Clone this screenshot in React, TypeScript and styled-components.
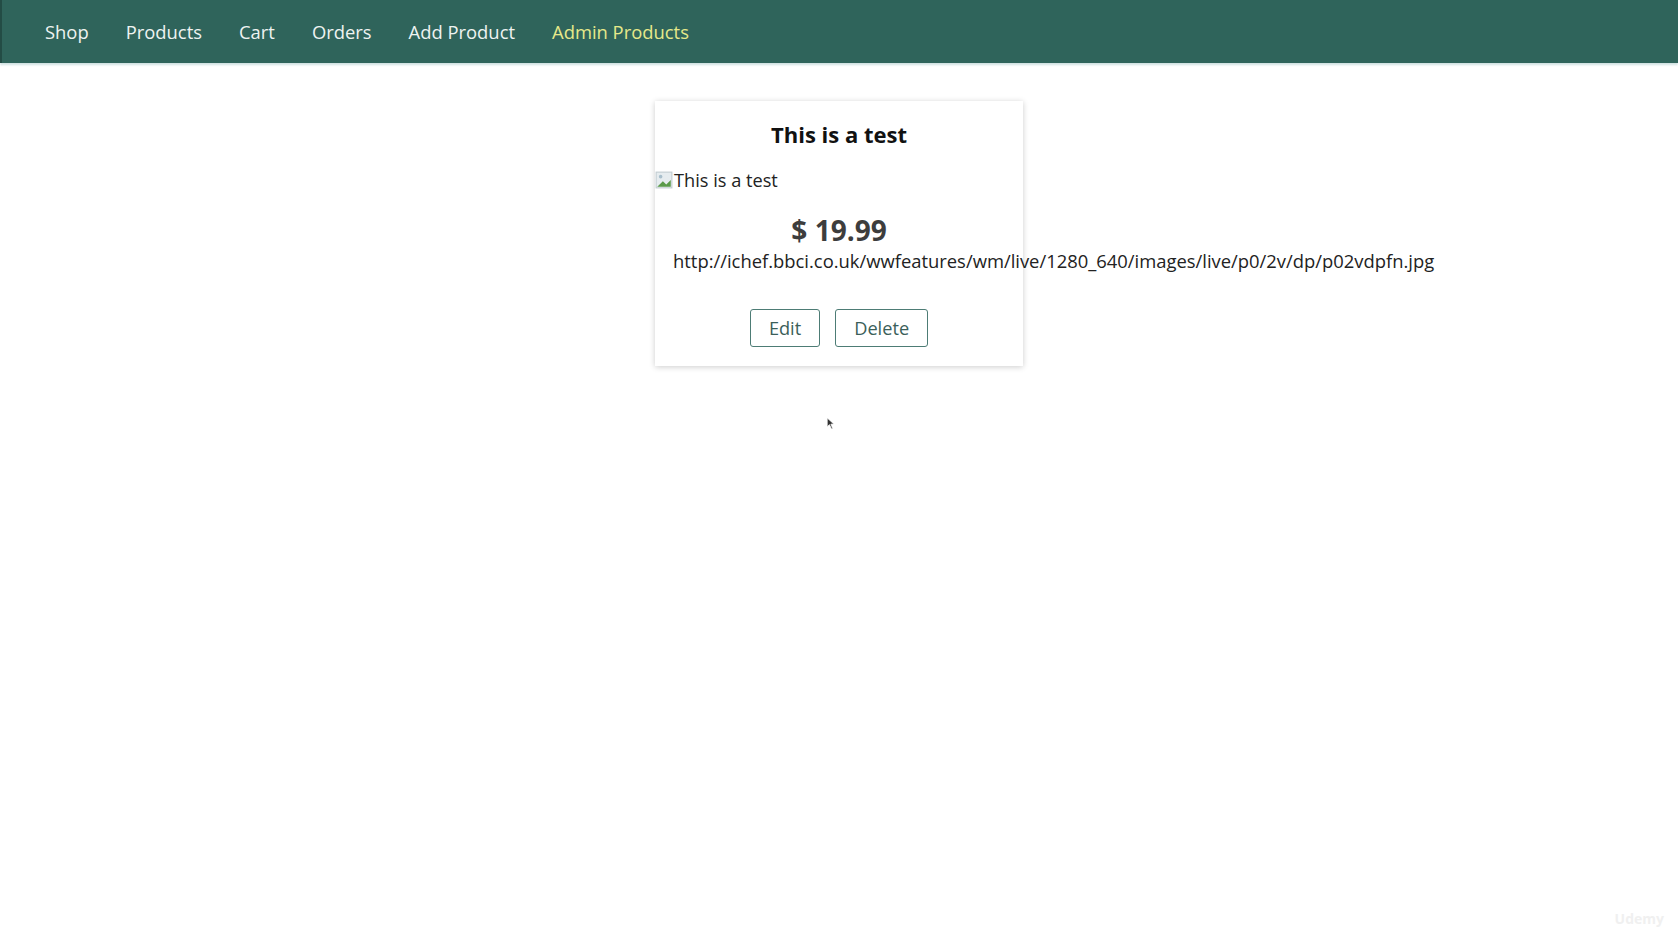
import * as React from 'react';
import styled, { createGlobalStyle } from 'styled-components';

const GlobalStyle = createGlobalStyle`
  * {
    box-sizing: border-box;
  }
  html, body {
    margin: 0;
    padding: 0;
    background: #ffffff;
    font-family: 'Open Sans', 'Liberation Sans', sans-serif;
    font-size: 18.4px;
  }
`;

const navItems = ['Shop', 'Products', 'Cart', 'Orders', 'Add Product', 'Admin Products'];
const activeItem = 'Admin Products';

const imageUrl =
  'http://ichef.bbci.co.uk/wwfeatures/wm/live/1280_640/images/live/p0/2v/dp/p02vdpfn.jpg';

export default class App extends React.PureComponent {
  render () {
    return (
      <Page>
        <GlobalStyle />
        <MainHeader>
          <NavList>
            {navItems.map(item => (
              <NavItem key={item}>
                <NavLink active={item === activeItem}>{item}</NavLink>
              </NavItem>
            ))}
          </NavList>
        </MainHeader>
        <Main>
          <Card>
            <CardTitle>This is a test</CardTitle>
            <BrokenImage>
              <BrokenIcon />
              <span>This is a test</span>
            </BrokenImage>
            <Price>$ 19.99</Price>
            <Description>{imageUrl}</Description>
            <Actions>
              <Button>Edit</Button>
              <Button>Delete</Button>
            </Actions>
          </Card>
          <Cursor>
            <svg width="9" height="13" viewBox="0 0 8 12">
              <path d="M1 1 L1 9 L3 7 L5 11 L6 10.5 L4.3 6.6 L7 6.4 Z" fill="#333" stroke="#fff" strokeWidth="0.6" />
            </svg>
          </Cursor>
        </Main>
        <Watermark>Udemy</Watermark>
      </Page>
    );
  }
}

const BrokenIcon = () => (
  <svg width="18" height="18" viewBox="0 0 16 16">
    <rect x="1" y="1" width="14" height="14" fill="#e6ecef" stroke="#c3ccd1" />
    <path d="M2 14 L7 9 L10 12 L14 8 L14 14 Z" fill="#5b9a4a" />
    <circle cx="5" cy="5" r="1.6" fill="#a9bfcc" />
  </svg>
);

const Page = styled.div`
  position: relative;
  min-height: 940px;
`;

const MainHeader = styled.header`
  height: 63px;
  background: #2f645b;
  border-left: 2px solid #234c45;
  box-shadow: 0 2px 2px rgba(120, 170, 170, 0.35);
  display: flex;
  align-items: center;
  padding: 0 0 0 27px;
`;

const NavList = styled.ul`
  list-style: none;
  margin: 0;
  padding: 0 0 0 16px;
  display: flex;
  align-items: center;
  gap: 37px;
`;

const NavItem = styled.li`
  margin: 0;
`;

const NavLink = styled.a<{ active?: boolean }>`
  font-size: 18.4px;
  color: ${p => (p.active ? '#e6e98a' : '#eef3f1')};
  text-decoration: none;
`;

const Main = styled.main`
  position: relative;
  display: flex;
  justify-content: center;
  padding-top: 38px;
`;

const Card = styled.article`
  width: 368px;
  background: #fff;
  box-shadow: 0 1px 6px rgba(0, 0, 0, 0.2);
  display: flex;
  flex-direction: column;
  align-items: stretch;
  padding-bottom: 19px;
`;

const CardTitle = styled.h1`
  margin: 0;
  padding: 16px 18px 0;
  text-align: center;
  font-size: 22px;
  font-weight: 700;
  color: #111;
  line-height: 34px;
`;

const BrokenImage = styled.div`
  display: flex;
  align-items: center;
  gap: 1px;
  height: 24px;
  margin-top: 17px;
  font-size: 18.2px;
  color: #222;
  line-height: 24px;
`;

const Price = styled.h2`
  margin: 20px 0 0;
  text-align: center;
  font-size: 28px;
  font-weight: 700;
  color: #3d3d3d;
  line-height: 36px;
`;

const Description = styled.p`
  margin: 0;
  padding: 0 18px;
  white-space: nowrap;
  font-size: 18.4px;
  color: #222;
  line-height: 26px;
`;

const Actions = styled.div`
  display: flex;
  justify-content: center;
  gap: 15px;
  margin-top: 35px;
`;

const Button = styled.button`
  font-family: 'Open Sans', 'Liberation Sans', sans-serif;
  font-size: 18.2px;
  color: #3b5f5a;
  background: #fff;
  border: 1.5px solid #4d7c75;
  border-radius: 3px;
  height: 38px;
  padding: 0 18px;
  cursor: pointer;
`;

const Cursor = styled.div`
  position: absolute;
  left: 826px;
  top: 347px;
`;

const Watermark = styled.div`
  position: absolute;
  right: 14px;
  bottom: 12px;
  font-size: 14px;
  font-weight: 700;
  color: #f0f0f0;
`;
